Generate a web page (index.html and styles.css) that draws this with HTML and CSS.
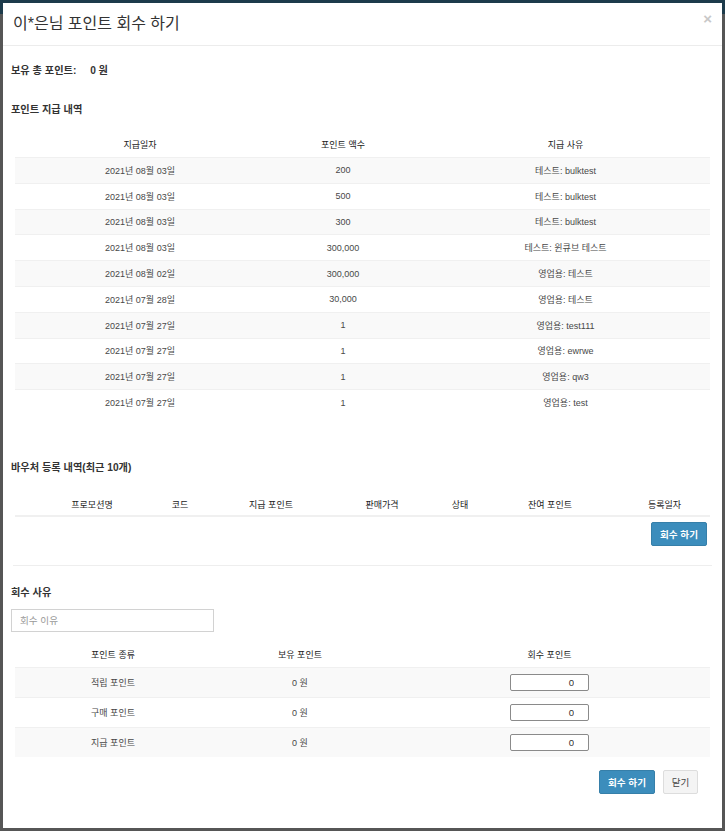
FILE: index.html
```html
<!DOCTYPE html>
<html lang="ko">
<head>
<meta charset="utf-8">
<title>포인트 회수</title>
<link rel="stylesheet" href="styles.css">
</head>
<body>
<div class="page">
  <div class="topbar"></div>
</div>
<div class="modal">
  <div class="modal-header">
    <h4 class="modal-title">이*은님 포인트 회수 하기</h4>
    <span class="close">×</span>
  </div>
  <div class="modal-body">
    <p class="label total">보유 총 포인트: <span class="total-val">0 원</span></p>
    <p class="label sec1">포인트 지급 내역</p>
    <table class="tbl hist">
      <colgroup><col class="h1"><col class="h2"><col class="h3"></colgroup>
      <thead><tr><th>지급일자</th><th>포인트 액수</th><th>지급 사유</th></tr></thead>
      <tbody>
        <tr><td>2021년 08월 03일</td><td>200</td><td>테스트: bulktest</td></tr>
        <tr><td>2021년 08월 03일</td><td>500</td><td>테스트: bulktest</td></tr>
        <tr><td>2021년 08월 03일</td><td>300</td><td>테스트: bulktest</td></tr>
        <tr><td>2021년 08월 03일</td><td>300,000</td><td>테스트: 윈큐브 테스트</td></tr>
        <tr><td>2021년 08월 02일</td><td>300,000</td><td>영업용: 테스트</td></tr>
        <tr><td>2021년 07월 28일</td><td>30,000</td><td>영업용: 테스트</td></tr>
        <tr><td>2021년 07월 27일</td><td>1</td><td>영업용: test111</td></tr>
        <tr><td>2021년 07월 27일</td><td>1</td><td>영업용: ewrwe</td></tr>
        <tr><td>2021년 07월 27일</td><td>1</td><td>영업용: qw3</td></tr>
        <tr><td>2021년 07월 27일</td><td>1</td><td>영업용: test</td></tr>
      </tbody>
    </table>

    <p class="label sec2">바우처 등록 내역(최근 10개)</p>
    <table class="tbl voucher">
      <colgroup><col class="v1"><col class="v2"><col class="v3"><col class="v4"><col class="v5"><col class="v6"><col class="v7"></colgroup>
      <thead><tr><th>프로모션명</th><th>코드</th><th>지급 포인트</th><th>판매가격</th><th>상태</th><th>잔여 포인트</th><th class="last">등록일자</th></tr></thead>
    </table>
    <div class="btn-row">
      <button class="btn btn-primary">회수 하기</button>
    </div>
    <hr class="divider">

    <p class="label sec3">회수 사유</p>
    <input class="reason" type="text" placeholder="회수 이유">
    <table class="tbl recall">
      <colgroup><col class="r1"><col class="r2"><col class="r3"></colgroup>
      <thead><tr><th>포인트 종류</th><th>보유 포인트</th><th>회수 포인트</th></tr></thead>
      <tbody>
        <tr><td>적립 포인트</td><td>0 원</td><td><input class="num" type="text" value="0"></td></tr>
        <tr><td>구매 포인트</td><td>0 원</td><td><input class="num" type="text" value="0"></td></tr>
        <tr><td>지급 포인트</td><td>0 원</td><td><input class="num" type="text" value="0"></td></tr>
      </tbody>
    </table>
  </div>
  <div class="modal-footer">
    <button class="btn btn-primary">회수 하기</button>
    <button class="btn btn-default">닫기</button>
  </div>
</div>
</body>
</html>
```
FILE: styles.css
```css
html, body {
  margin: 0;
  padding: 0;
}
body {
  background: #565656;
  font-family: "Liberation Sans", "Noto Sans CJK KR", sans-serif;
  color: #333;
  width: 725px;
  height: 831px;
  overflow: hidden;
}
.page {
  height: 831px;
}
.topbar {
  height: 14px;
  background: #1d3b4b;
}
.modal {
  position: absolute;
  left: 3px;
  top: 3px;
  width: 719px;
  height: 825px;
  background: #fff;
  box-sizing: border-box;
}
.modal-header {
  height: 42px;
  border-bottom: 1px solid #ececec;
  display: flex;
  align-items: center;
  justify-content: space-between;
  padding: 0 10px 0 10px;
}
.modal-title {
  margin: 0;
  font-size: 16px;
  font-weight: normal;
  color: #333;
  position: relative;
  top: -2px;
}
.close {
  font-size: 15px;
  font-weight: bold;
  color: #c8c8c8;
  position: relative;
  top: -6px;
  right: 0;
}
.modal-body {
  padding: 0 12px 0 8px;
}
.label {
  margin: 0;
  font-size: 10.2px;
  font-weight: bold;
  line-height: 14px;
  color: #333;
}
.total {
  padding-top: 18px;
}
.total-val {
  margin-left: 11px;
}
.sec1 {
  margin-top: 25px;
}
.tbl {
  border-collapse: collapse;
  table-layout: fixed;
  width: 695px;
  margin-left: 4px;
  font-size: 9px;
}
.tbl th {
  font-weight: normal;
  color: #222;
  text-align: center;
  padding: 0;
}
.tbl td {
  text-align: center;
  color: #484848;
  padding: 0;
  border-top: 1px solid #f0f0f0;
}
.hist {
  margin-top: 15px;
}
.hist th {
  height: 25px;
}
.hist td {
  height: 24.8px;
}
.hist tbody tr:nth-child(odd) td,
.recall tbody tr:nth-child(odd) td {
  background: #f9f9f9;
}
.h1 { width: 250px; }
.h2 { width: 156px; }
.h3 { width: 289px; }

.sec2 {
  margin-top: 46px;
  font-weight: 600;
}
.voucher {
  margin-top: 19px;
}
.voucher th {
  height: 21px;
  border-bottom: 2px solid #f0f0f0;
}
.voucher th.last {
  padding-left: 26px;
}
.v1 { width: 154px; }
.v2 { width: 22px; }
.v3 { width: 160px; }
.v4 { width: 62px; }
.v5 { width: 94px; }
.v6 { width: 86px; }
.v7 { width: 117px; }

.btn-row {
  display: flex;
  justify-content: flex-end;
  margin-top: 5px;
  padding-right: 3px;
}
.btn {
  font-family: "Liberation Sans", "Noto Sans CJK KR", sans-serif;
  font-size: 9.6px;
  height: 24px;
  border-radius: 2px;
  padding: 0 8px;
  cursor: pointer;
}
.btn-primary {
  background: #3c8dbc;
  border: 1px solid #367fa9;
  color: #fff;
  font-weight: bold;
  width: 56px;
}
.btn-default {
  background: #f4f4f4;
  border: 1px solid #ddd;
  color: #444;
  width: 35px;
  padding: 0;
}
.divider {
  border: 0;
  border-top: 1px solid #eee;
  margin: 19px -2px 0 2px;
}
.sec3 {
  margin-top: 20px;
}
.reason {
  display: block;
  margin-top: 9px;
  width: 203px;
  height: 23px;
  box-sizing: border-box;
  border: 1px solid #d2d2d2;
  padding: 0 8px;
  font-family: "Liberation Sans", "Noto Sans CJK KR", sans-serif;
  font-size: 9.6px;
  color: #555;
  outline: none;
}
.reason::placeholder {
  color: #999;
}
.recall {
  margin-top: 10px;
}
.recall th {
  height: 25px;
}
.recall td {
  height: 29px;
}
.r1 { width: 196px; }
.r2 { width: 178px; }
.r3 { width: 321px; }
.num {
  width: 79px;
  height: 17px;
  box-sizing: border-box;
  border: 1px solid #8a8a8a;
  border-radius: 2px;
  text-align: right;
  padding: 0 14px 0 0;
  font-family: "Liberation Sans", "Noto Sans CJK KR", sans-serif;
  font-size: 9.6px;
  color: #333;
  vertical-align: middle;
  background: #fff;
}
.modal-footer {
  display: flex;
  justify-content: flex-end;
  gap: 8px;
  padding: 13px 24px 0 0;
}
```
